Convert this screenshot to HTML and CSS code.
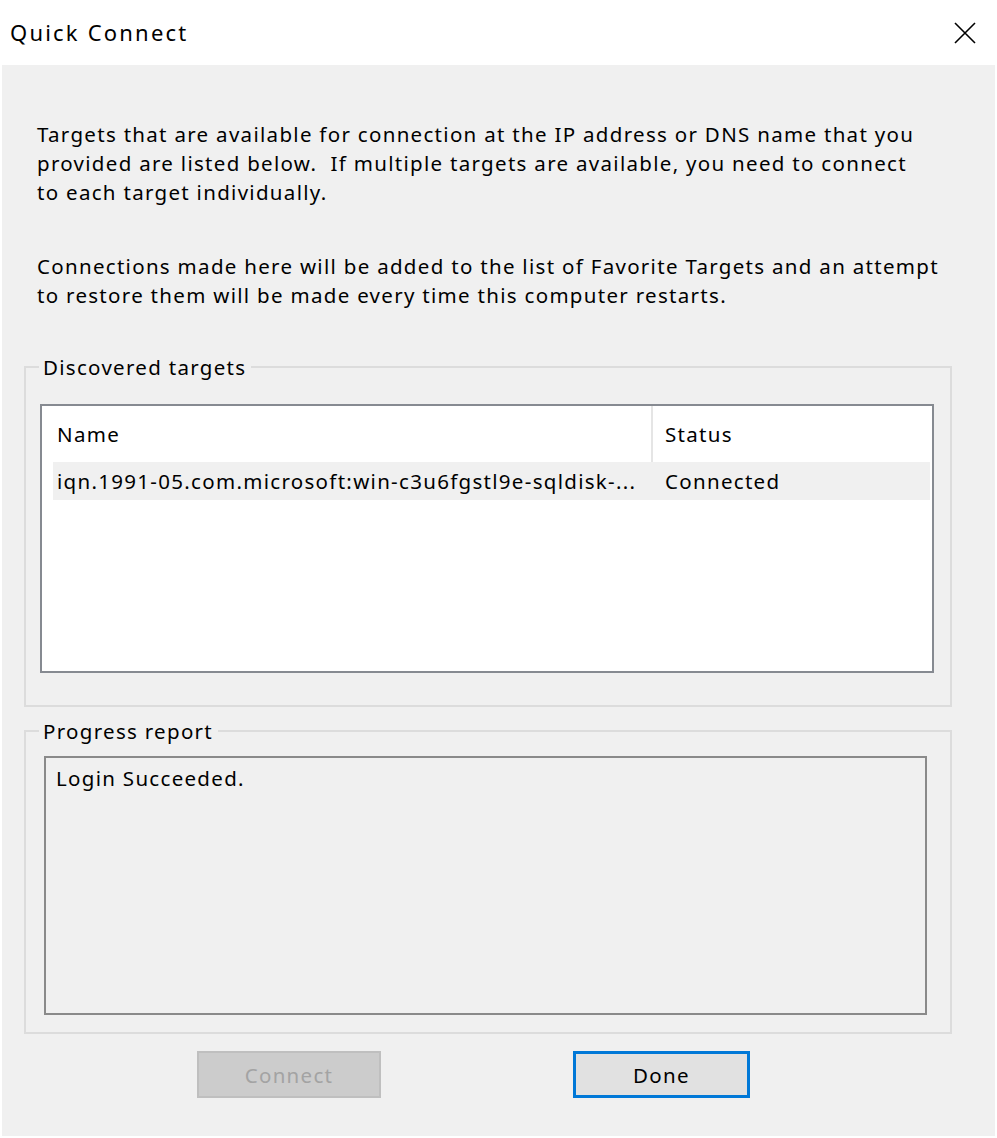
FILE: index.html
```html
<!DOCTYPE html>
<html lang="en">
<head>
<meta charset="utf-8">
<title>Quick Connect</title>
<link rel="stylesheet" href="styles.css">
</head>
<body>
<div class="window">
  <header class="titlebar">
    <span class="title">Quick Connect</span>
    <button class="close" aria-label="Close">
      <svg width="24" height="24" viewBox="0 0 24 24"><path d="M2 2 L22 22 M22 2 L2 22" stroke="#000" stroke-width="1.6" fill="none"/></svg>
    </button>
  </header>
  <main class="client">
    <p class="intro">Targets that are available for connection at the IP address or DNS name that you<br>provided are listed below.&nbsp; If multiple targets are available, you need to connect<br>to each target individually.</p>
    <p class="intro second">Connections made here will be added to the list of Favorite Targets and an attempt<br>to restore them will be made every time this computer restarts.</p>

    <fieldset class="group targets">
      <legend>Discovered targets</legend>
      <div class="listview">
        <div class="lv-header">
          <div class="col name">Name</div>
          <div class="col status">Status</div>
        </div>
        <div class="lv-row">
          <div class="col name">iqn.1991-05.com.microsoft:win-c3u6fgstl9e-sqldisk-...</div>
          <div class="col status">Connected</div>
        </div>
      </div>
    </fieldset>

    <fieldset class="group progress">
      <legend>Progress report</legend>
      <div class="textbox">Login Succeeded.</div>
    </fieldset>

    <div class="buttons">
      <button class="btn disabled" disabled>Connect</button>
      <button class="btn default">Done</button>
    </div>
  </main>
</div>
</body>
</html>
```

FILE: styles.css
```css
html, body {
  margin: 0;
  padding: 0;
  background: #ffffff;
}

.window {
  width: 997px;
  height: 1138px;
  display: flex;
  flex-direction: column;
  background: #ffffff;
  font-family: "Noto Sans", "Open Sans", sans-serif;
  font-size: 20.5px;
  letter-spacing: 1.3px;
  color: #000;
}

.titlebar {
  height: 65px;
  flex: none;
  display: flex;
  align-items: center;
  justify-content: space-between;
  padding: 0 20px 0 10px;
}

.title {
  font-size: 22px;
  letter-spacing: 2.2px;
  position: relative;
  top: -1px;
}

.close {
  border: 0;
  background: transparent;
  padding: 0;
  width: 24px;
  height: 24px;
  display: flex;
}

.client {
  flex: 1;
  margin: 0 2px 2px 2px;
  background: #f0f0f0;
  padding: 55px 0 0 22px;
  display: flex;
  flex-direction: column;
}

.intro {
  margin: 0 0 0 13px;
  line-height: 29px;
}

.intro.second {
  margin-top: 45px;
}

.group {
  margin: 0;
  width: 928px;
  box-sizing: border-box;
  border: 2px solid #dcdcdc;
  padding: 0;
}

.group legend {
  padding: 0 5px 0 4px;
  line-height: 28px;
  height: 28px;
}

.targets {
  margin-top: 43px;
  padding: 23px 16px 32px 14px;
}

.targets legend {
  margin-left: -1px;
}

.listview {
  height: 269px;
  box-sizing: border-box;
  border: 2px solid #868a91;
  background: #ffffff;
  padding: 0 2px 0 11px;
}

.lv-header {
  display: flex;
  height: 56px;
  margin-right: 3px;
}

.lv-header .col {
  display: flex;
  align-items: center;
}

.lv-header .col.name {
  border-right: 2px solid #e5e5e5;
}

.col.name {
  width: 594px;
  padding-left: 4px;
}

.col.status {
  padding-left: 12px;
}

.lv-row {
  display: flex;
  align-items: center;
  height: 38px;
  background: #f0f0f0;
}

.lv-row .col.name {
  width: 596px;
  white-space: nowrap;
  overflow: hidden;
}

.progress {
  margin-top: 10px;
  padding: 11px 23px 17px 18px;
}

.progress legend {
  margin-left: -5px;
}

.textbox {
  height: 259px;
  box-sizing: border-box;
  border: 2px solid #8a8a8a;
  background: #f0f0f0;
  padding: 5px 0 0 10px;
  line-height: 30px;
}

.buttons {
  display: flex;
  margin-top: 17px;
  padding-left: 173px;
  gap: 192px;
}

.btn {
  font-family: "Noto Sans", "Open Sans", sans-serif;
  font-size: 20.5px;
  letter-spacing: 1.3px;
  height: 47px;
  box-sizing: border-box;
  padding: 0;
}

.btn.disabled {
  width: 184px;
  background: #cccccc;
  border: 2px solid #bfbfbf;
  color: #a3a3a3;
}

.btn.default {
  width: 177px;
  background: #e1e1e1;
  border: 3px solid #0078d7;
  color: #000;
}
```
